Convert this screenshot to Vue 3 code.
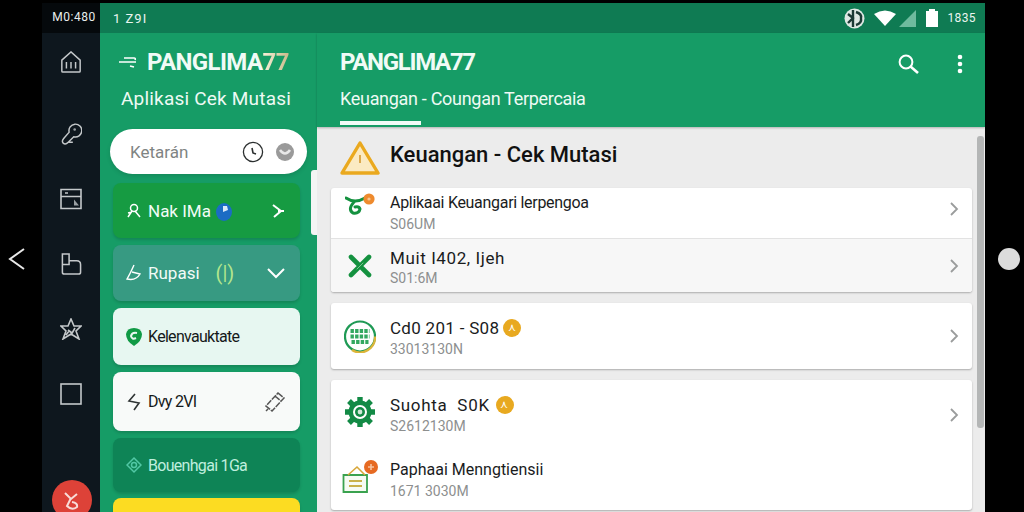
<script setup>
const mainRows = [
  { title: "Aplikaai Keuangari lerpengoa", sub: "S06UM" },
  { title: "Muit I402, Ijeh", sub: "S01:6M" },
]
</script>

<template>
  <div class="screen">
    <div class="gutter left-gutter">
      <svg width="20" height="26" viewBox="0 0 20 26" fill="none" stroke="#e8e8e8" stroke-width="2">
        <path d="M17 3 L3 13 L17 23" />
      </svg>
    </div>

    <div class="phone">
      <nav class="rail">
        <div class="rail-status">M0:480</div>
        <div class="rail-icons">
          <svg class="rail-icon" viewBox="0 0 22 24"><path d="M1 10 L11 1 L21 10 V22 Q21 23 20 23 H2 Q1 23 1 22 Z M6 12 V19 M11 12 V19 M16 12 V19" /></svg>
          <svg class="rail-icon key" viewBox="0 0 22 24"><path d="M9 10 A7 7 0 1 1 14 15 L8 21 Q5 24 2.5 22 Q0.5 20 3 17 Z M8 21 L13 21" /><circle class="solid" cx="15" cy="7" r="1.4" /></svg>
          <svg class="rail-icon" viewBox="0 0 22 21"><path d="M1 1 H21 V20 H1 Z M1 8 H21 M5 4.5 H8" /><path class="solid" d="M14 11 L19 17 H14 Z" /></svg>
          <svg class="rail-icon" viewBox="0 0 22 23"><path d="M2 1 H9 V8 H17 Q21 8 21 12 V20 Q21 22 19 22 H4 Q2 22 2 20 Z M2 12 H9 V8" /></svg>
          <svg class="rail-icon" viewBox="0 0 22 22"><path d="M11 1 L14 8 L21 8 L16 13 L19 21 L11 16 L3 21 L6 13 L1 8 L8 8 Z M8 12 L12 15 M15 10 L11 17 M6 17 L9 13" /></svg>
          <svg class="rail-icon" viewBox="0 0 22 22"><rect x="1" y="1" width="20" height="20" /></svg>
        </div>
        <div class="rail-fab">
          <svg width="16" height="20" viewBox="0 0 16 20" fill="none" stroke="#f8dcd8" stroke-width="2"><path d="M1 2 L7 8 L13 3 M7 7 L3 15 Q8 20 13 16 Q14 12 8 11" /></svg>
        </div>
      </nav>

      <div class="app">
        <div class="status-bar">
          <span class="status-time">1 Z9I</span>
          <div class="status-right">
            <svg width="21" height="21" viewBox="0 0 21 21"><circle cx="10.5" cy="10.5" r="10" fill="#dfe8e4" /><path d="M9 2 V19 M4 6 L9 10 L4 15 M12 4 Q18 6 17 10 Q18 15 12 17" fill="none" stroke="#1c3a35" stroke-width="2.4" /></svg>
            <svg width="22" height="16" viewBox="0 0 22 16"><path d="M0 4 Q11 -3 22 4 L11 16 Z" fill="#fff" /></svg>
            <svg class="signal" width="17" height="17" viewBox="0 0 17 17"><path d="M17 0 V17 H0 Z" fill="#6fbb9e" /></svg>
            <svg class="battery" width="12" height="18" viewBox="0 0 12 18"><path d="M3 0 H9 V2 H12 V18 H0 V2 H3 Z" fill="#fff" /></svg>
            <span class="status-num">1835</span>
          </div>
        </div>

        <div class="body">
          <aside class="side">
            <div class="side-head">
              <div class="side-brand">
                <svg width="18" height="12" viewBox="0 0 18 12" fill="none" stroke="#fff" stroke-width="1.6"><path d="M0 6 H17 M5 2 H15 Q17 2 16 4 M11 10 L15 11" /></svg>
                <span class="brand-big">PANGLIMA<span class="brand-num">77</span></span>
              </div>
              <div class="side-sub">Aplikasi Cek Mutasi</div>
            </div>

            <div class="search">
              <span class="search-text">Ketarán</span>
              <svg width="22" height="22" viewBox="0 0 22 22" fill="none" stroke="#2b2f2f" stroke-width="1.3"><circle cx="11" cy="11" r="9.6" /><path d="M10 7 L11 12 L14 13" stroke-width="1.6" /></svg>
              <svg width="18" height="18" viewBox="0 0 18 18"><circle cx="9" cy="9" r="9" fill="#9a9a9a" /><path d="M4 7 Q9 14 14 7" fill="none" stroke="#e8e8e8" stroke-width="2.6" /></svg>
            </div>

            <div class="side-list">
              <div class="side-card green">
                <svg class="si" viewBox="0 0 16 18" fill="none" stroke="#fff" stroke-width="1.5"><circle cx="8" cy="6" r="3.5" /><path d="M2 15 L6 9 M9 9 L14 15 M2 11 L6 10" /></svg>
                <span class="label">Nak IMa</span>
                <svg class="pin" width="16" height="20" viewBox="0 0 16 20"><ellipse cx="8" cy="11" rx="8" ry="9" fill="#1b6cc4" /><path d="M7 5 H11 L12 9 L7 11 Z" fill="#dbeafa" /></svg>
                <svg class="end" width="14" height="14" viewBox="0 0 14 14" fill="none" stroke="#fff" stroke-width="2"><path d="M2 1 L10 7 L3 13 M7 7 H13" /></svg>
              </div>
              <div class="side-card teal">
                <svg class="si" viewBox="0 0 16 18" fill="none" stroke="#fff" stroke-width="1.4"><path d="M8 1 Q4 10 1 15 Q10 17 14 10 L6 8" /></svg>
                <span class="label">Rupasi</span>
                <span class="paren">(|)</span>
                <svg class="end" width="18" height="12" viewBox="0 0 18 12" fill="none" stroke="#fff" stroke-width="2"><path d="M1 2 L9 10 L17 2" /></svg>
              </div>
              <div class="side-card mint">
                <svg class="si shield" viewBox="0 0 16 18"><path d="M8 0 Q15 0 16 6 Q16 13 8 18 Q0 13 0 6 Q1 0 8 0 Z" fill="#109a45" /><path d="M11 5 Q6 4 5 8 Q6 12 10 10" fill="none" stroke="#e7f7f1" stroke-width="2" /></svg>
                <span class="label dark tight">Kelenvauktate</span>
              </div>
              <div class="side-card white">
                <svg class="si" viewBox="0 0 16 18" fill="none" stroke="#2e3333" stroke-width="1.6"><path d="M9 1 L3 8 L13 10 L8 17" /></svg>
                <span class="label dark tight">Dvy 2VI</span>
                <svg class="end" width="20" height="20" viewBox="0 0 20 20" fill="none" stroke="#555" stroke-width="1.5" stroke-dasharray="6 1"><path d="M13 1 L19 6 L7 19 L1 14 Z M10 4 L16 9 M1 19 L3 17" /></svg>
              </div>
              <div class="side-card deep">
                <svg class="si" viewBox="0 0 16 16" fill="none" stroke="#52c8a5" stroke-width="1.5"><path d="M8 1 L15 8 L8 15 L1 8 Z" /><circle cx="8" cy="8" r="2.5" /></svg>
                <span class="label pale tight">Bouenhgai 1Ga</span>
              </div>
              <div class="side-card yellow"></div>
            </div>
          </aside>
          <div class="side-tab"></div>

          <section class="main">
            <header class="main-head">
              <div class="brand-big main-brand">PANGLIMA77</div>
              <div class="main-tab">Keuangan - Coungan Terpercaia</div>
              <div class="tab-line"></div>
              <div class="head-actions">
                <svg width="21" height="20" viewBox="0 0 21 20" fill="none" stroke="#fff" stroke-width="2"><circle cx="8" cy="8" r="6.4" /><path d="M12.5 12.5 L20 19" stroke-width="2.6" /></svg>
                <svg width="6" height="20" viewBox="0 0 6 20" fill="#fff"><circle cx="3" cy="3" r="2.3" /><circle cx="3" cy="10" r="2.3" /><circle cx="3" cy="17" r="2.3" /></svg>
              </div>
            </header>

            <div class="content">
              <div class="content-title">
                <svg width="40" height="34" viewBox="0 0 40 34"><path d="M20 2 L38 32 H2 Z" fill="#fbeac2" stroke="#eaa91f" stroke-width="3.4" stroke-linejoin="round" /><path d="M20 14 V22" stroke="#d19224" stroke-width="1.5" /></svg>
                <h1>Keuangan - Cek Mutasi</h1>
              </div>

              <div class="cards">
                <div class="card first">
                  <div class="row row-a">
                    <span class="ico">
                      <svg width="30" height="23" viewBox="0 0 30 23" fill="none"><path d="M1 6 Q10 12 20 6 M10 9 Q2 17 8 21 Q14 22 15 17 Q14 14 10 15" stroke="#14913f" stroke-width="3" stroke-linecap="round" /><circle cx="24" cy="7" r="5.6" fill="#ee8a2d" /><circle cx="24" cy="7" r="1.6" fill="#f8c58e" /></svg>
                    </span>
                    <div class="txt">
                      <div class="t">{{ mainRows[0].title }}</div>
                      <div class="s">{{ mainRows[0].sub }}</div>
                    </div>
                    <svg class="chev" viewBox="0 0 10 16"><path d="M2 2 L8 8 L2 14" /></svg>
                  </div>
                  <div class="row row-b">
                    <span class="ico">
                      <svg width="24" height="24" viewBox="0 0 24 24" fill="none" stroke="#14913f" stroke-width="4.6" stroke-linecap="round"><path d="M3 3 L21 21 M21 3 L3 21" /><path d="M9 15 L15 9" stroke="#7ec795" stroke-width="1" /></svg>
                    </span>
                    <div class="txt">
                      <div class="t">{{ mainRows[1].title }}</div>
                      <div class="s">{{ mainRows[1].sub }}</div>
                    </div>
                    <svg class="chev" viewBox="0 0 10 16"><path d="M2 2 L8 8 L2 14" /></svg>
                  </div>
                </div>

                <div class="card row row-c">
                  <span class="ico">
                    <svg width="32" height="33" viewBox="0 0 32 33" fill="none"><circle cx="16" cy="16.5" r="15" stroke="#1f9a55" stroke-width="2.2" /><path d="M8 30 A15 15 0 0 0 31 16.5" stroke="#dcb53a" stroke-width="2.2" /><path d="M6.5 11 H25.5 M6.5 16.5 H25.5 M7.5 22 H24.5" stroke="#33a860" stroke-width="4" stroke-dasharray="3.4 1.2" /></svg>
                  </span>
                  <div class="txt">
                    <div class="t with-badge">Cd0 201 - S08 <span class="badge">⋏</span></div>
                    <div class="s">33013130N</div>
                  </div>
                  <svg class="chev" viewBox="0 0 10 16"><path d="M2 2 L8 8 L2 14" /></svg>
                </div>

                <div class="card last">
                  <div class="row row-d">
                    <span class="ico">
                      <svg width="30" height="30" viewBox="0 0 30 30" fill="none"><path d="M15 0 V30 M0 15 H30 M4 4 L26 26 M26 4 L4 26" stroke="#128a45" stroke-width="5.4" /><circle cx="15" cy="15" r="11.5" fill="#128a45" /><circle cx="15" cy="15" r="7" fill="#fff" /><circle cx="15" cy="15" r="5" fill="#128a45" /><circle cx="15" cy="15" r="2.4" fill="#cfe8d8" /></svg>
                    </span>
                    <div class="txt">
                      <div class="t with-badge">Suohta &nbsp;S0K <span class="badge">⋏</span></div>
                      <div class="s">S2612130M</div>
                    </div>
                    <svg class="chev" viewBox="0 0 10 16"><path d="M2 2 L8 8 L2 14" /></svg>
                  </div>
                  <div class="row row-e">
                    <span class="ico">
                      <svg width="36" height="33" viewBox="0 0 36 33" fill="none"><path d="M1.5 15 H25 V32 H1.5 Z" fill="#f6fbf3" stroke="#3aa24f" stroke-width="1.8" /><path d="M6 15 L15 7 L23 15" stroke="#d8a73a" stroke-width="1.6" /><path d="M7 21 H20 M7 26 H20" stroke="#c9b14a" stroke-width="1.8" /><circle cx="29" cy="7" r="7" fill="#e66a22" /><path d="M26 7 H32 M29 4 V10" stroke="#f7c3a0" stroke-width="1.6" /></svg>
                    </span>
                    <div class="txt">
                      <div class="t">Paphaai Menngtiensii</div>
                      <div class="s">1671 3030M</div>
                    </div>
                  </div>
                </div>
              </div>
              <div class="scrollbar"></div>
            </div>
          </section>
        </div>
      </div>
    </div>

    <div class="gutter right-gutter"><div class="home-dot"></div></div>
  </div>
</template>

<style>
body {
  background: #000;
}
</style>

<style scoped>
.screen {
  display: flex;
  width: 1024px;
  height: 512px;
  overflow: hidden;
  background: #000;
  font-family: Roboto, "Liberation Sans", sans-serif;
}

.gutter {
  display: flex;
  align-items: center;
  justify-content: center;
  flex: none;
}

.left-gutter {
  width: 42px;
  padding: 5px 8px 0 0;
  box-sizing: border-box;
  height: 512px;
}

.right-gutter {
  width: 39px;
  padding: 5px 0 0 8px;
  box-sizing: border-box;
  height: 512px;
}

.home-dot {
  width: 22px;
  height: 22px;
  border-radius: 50%;
  background: #dcdcdc;
}

.phone {
  display: flex;
  width: 943px;
  height: 512px;
  flex: none;
  padding-top: 3px;
  box-sizing: border-box;
}

/* left rail */
.rail {
  display: flex;
  flex-direction: column;
  align-items: center;
  width: 58px;
  flex: none;
  background: #0e171e;
  position: relative;
}

.rail-status {
  align-self: stretch;
  height: 30px;
  background: #05090c;
  color: #e9eeee;
  font-size: 12px;
  letter-spacing: 0.5px;
  line-height: 29px;
  text-align: center;
  padding-left: 6px;
}

.rail-icons {
  display: flex;
  flex-direction: column;
  align-items: center;
  gap: 43px;
  padding-top: 18px;
}

.rail-icon {
  width: 22px;
  height: 22px;
  fill: none;
  stroke: #c4c8ca;
  stroke-width: 1.6;
}

.rail-icon.key {
  margin-top: 7px;
}

.rail-icon .solid {
  fill: #9aa0a3;
  stroke: none;
}

.rail-fab {
  position: absolute;
  left: 10px;
  top: 477px;
  width: 40px;
  height: 40px;
  border-radius: 50%;
  background: #dd4238;
  display: flex;
  align-items: flex-start;
  justify-content: center;
  padding-top: 11px;
  box-sizing: border-box;
}

.app {
  flex: 1;
  display: flex;
  flex-direction: column;
  min-width: 0;
}

.status-bar {
  display: flex;
  align-items: center;
  justify-content: space-between;
  height: 30px;
  flex: none;
  padding: 0 9px 0 13px;
  background: #0f7b53;
  color: #eaf5f0;
  font-size: 12px;
}

.status-time {
  font-size: 13px;
  letter-spacing: 1px;
}

.status-right {
  display: flex;
  align-items: center;
  gap: 9px;
}

.status-num {
  letter-spacing: 0.4px;
}

.signal {
  margin-left: -6px;
}

.battery {
  margin-left: 1px;
}

.body {
  flex: 1;
  display: flex;
  position: relative;
  min-height: 0;
}

/* sidebar */
.side {
  width: 217px;
  flex: none;
  background: #169c66;
  padding: 0 10px;
  box-sizing: border-box;
}

.side-head {
  height: 96px;
  padding-top: 15px;
  box-sizing: border-box;
}

.side-brand {
  display: flex;
  align-items: center;
  gap: 10px;
  padding-left: 9px;
}

.brand-big {
  color: #f1fbf6;
  font-size: 24px;
  font-weight: 700;
  line-height: 28px;
  letter-spacing: -0.6px;
}

.main-brand {
  letter-spacing: -1.3px;
}

.brand-num {
  background: linear-gradient(90deg, #f6f0d8, #c9b98a);
  -webkit-background-clip: text;
  background-clip: text;
  color: transparent;
}

.side-sub {
  margin-top: 11px;
  padding-left: 11px;
  color: #eefaf4;
  font-size: 19px;
  letter-spacing: 0.2px;
  line-height: 24px;
}

.search {
  display: flex;
  align-items: center;
  gap: 12px;
  height: 45px;
  width: 197px;
  padding: 0 13px 0 20px;
  box-sizing: border-box;
  border-radius: 23px;
  background: #fff;
  box-shadow: 0 2px 4px rgba(0, 0, 0, 0.12);
}

.search-text {
  flex: 1;
  color: #7f8483;
  font-size: 17px;
}

.side-list {
  display: flex;
  flex-direction: column;
  gap: 7px;
  margin: 9px 0 0 3px;
  width: 187px;
}

.side-card {
  display: flex;
  align-items: center;
  gap: 6px;
  height: 56px;
  flex: none;
  padding: 0 15px 0 13px;
  box-sizing: border-box;
  border-radius: 8px;
  box-shadow: 0 2px 3px rgba(0, 0, 0, 0.14);
}

.si {
  width: 16px;
  height: 18px;
  flex: none;
}

.label {
  color: #f2fbf7;
  font-size: 17px;
}

.label.tight {
  font-size: 16px;
  letter-spacing: -0.7px;
}

.label.dark {
  color: #15191a;
}

.label.pale {
  color: #bfeede;
}

.end {
  margin-left: auto;
}

.green {
  background: #169b42;
  height: 55px;
}

.pin {
  margin-left: -1px;
}

.teal {
  background: #379a82;
}

.paren {
  margin-left: 10px;
  color: #b3e68d;
  font-size: 20px;
}

.mint {
  background: #e7f7f1;
  height: 57px;
}

.white {
  background: #f8faf9;
  height: 59px;
}

.deep {
  background: #0e8456;
  height: 54px;
}

.yellow {
  background: #fcdc22;
  height: 50px;
  margin-top: -1px;
}

.side-tab {
  position: absolute;
  left: 211px;
  top: 137px;
  width: 6px;
  height: 65px;
  background: #f3f5f4;
  border-radius: 3px 0 0 3px;
}

/* main */
.main {
  flex: 1;
  display: flex;
  flex-direction: column;
  min-width: 0;
}

.main-head {
  position: relative;
  height: 94px;
  flex: none;
  padding: 15px 0 0 23px;
  box-sizing: border-box;
  background: #169c66;
  box-shadow: 0 1px 2px rgba(0, 0, 0, 0.25);
  z-index: 1;
}

.main-tab {
  margin-top: 11px;
  color: #eefaf4;
  font-size: 18px;
  letter-spacing: -0.3px;
  line-height: 24px;
}

.tab-line {
  position: absolute;
  left: 23px;
  bottom: 2px;
  width: 81px;
  height: 4px;
  background: #f2fbf7;
}

.head-actions {
  position: absolute;
  right: 22px;
  top: 21px;
  display: flex;
  align-items: center;
  gap: 38px;
}

.content {
  flex: 1;
  position: relative;
  background: #ececec;
  padding-left: 14px;
  min-height: 0;
  overflow: hidden;
}

.content-title {
  display: flex;
  align-items: center;
  gap: 10px;
  height: 61px;
  padding-left: 9px;
}

.content-title h1 {
  margin: 0 0 6px;
  color: #111;
  font-size: 22px;
  font-weight: 500;
}

.cards {
  display: flex;
  flex-direction: column;
  gap: 11px;
  width: 641px;
}

.card {
  flex: none;
  background: #fff;
  border-radius: 3px;
  box-shadow: 0 1px 2px rgba(0, 0, 0, 0.28);
}

.row {
  display: flex;
  align-items: center;
  padding: 0 13px 0 14px;
}

.row-a {
  height: 50px;
  border-bottom: 1px solid #e2e2e2;
}

.row-a .t {
  letter-spacing: -0.3px;
}

.row-a .ico {
  margin-bottom: 20px;
}

.row-a .chev {
  margin-bottom: 8px;
}

.row-b {
  height: 53px;
  background: #f7f7f7;
  border-radius: 0 0 3px 3px;
}

.row-b .txt {
  padding-top: 4px;
}

.row-b .t {
  font-size: 17px;
  letter-spacing: 0.6px;
}

.row-b .s {
  margin-top: 1px;
}

.row-c {
  height: 66px;
}

.row-c .txt {
  padding-top: 3px;
}

.row-c .t {
  font-size: 17px;
  letter-spacing: 0.3px;
}

.row-d {
  height: 70px;
}

.row-d .ico {
  margin-bottom: 6px;
}

.row-d .t {
  font-size: 17px;
  letter-spacing: 0.7px;
  gap: 6px;
}

.row-e {
  height: 60px;
}

.row-e .ico {
  margin-bottom: 8px;
}

/* icons differ in width but share a centre line */
.ico {
  display: flex;
  justify-content: center;
  width: 30px;
  flex: none;
  margin-right: 15px;
}

.ico svg {
  flex: none;
}

.txt {
  flex: 1;
}

.t {
  color: #1a1c1d;
  font-size: 16px;
  line-height: 20px;
}

.with-badge {
  display: flex;
  align-items: center;
  gap: 4px;
}

.badge {
  display: flex;
  align-items: center;
  justify-content: center;
  width: 18px;
  height: 18px;
  border-radius: 50%;
  background: #e8a920;
  color: #fff;
  font-size: 11px;
}

.s {
  margin-top: 2px;
  color: #8d8f8f;
  font-size: 14px;
  line-height: 18px;
}

.chev {
  width: 10px;
  height: 16px;
  flex: none;
  fill: none;
  stroke: #9a9c9c;
  stroke-width: 1.8;
}

.scrollbar {
  position: absolute;
  right: 1px;
  top: 9px;
  width: 7px;
  height: 292px;
  border-radius: 3px;
  background: #b4b6b6;
}
</style>
